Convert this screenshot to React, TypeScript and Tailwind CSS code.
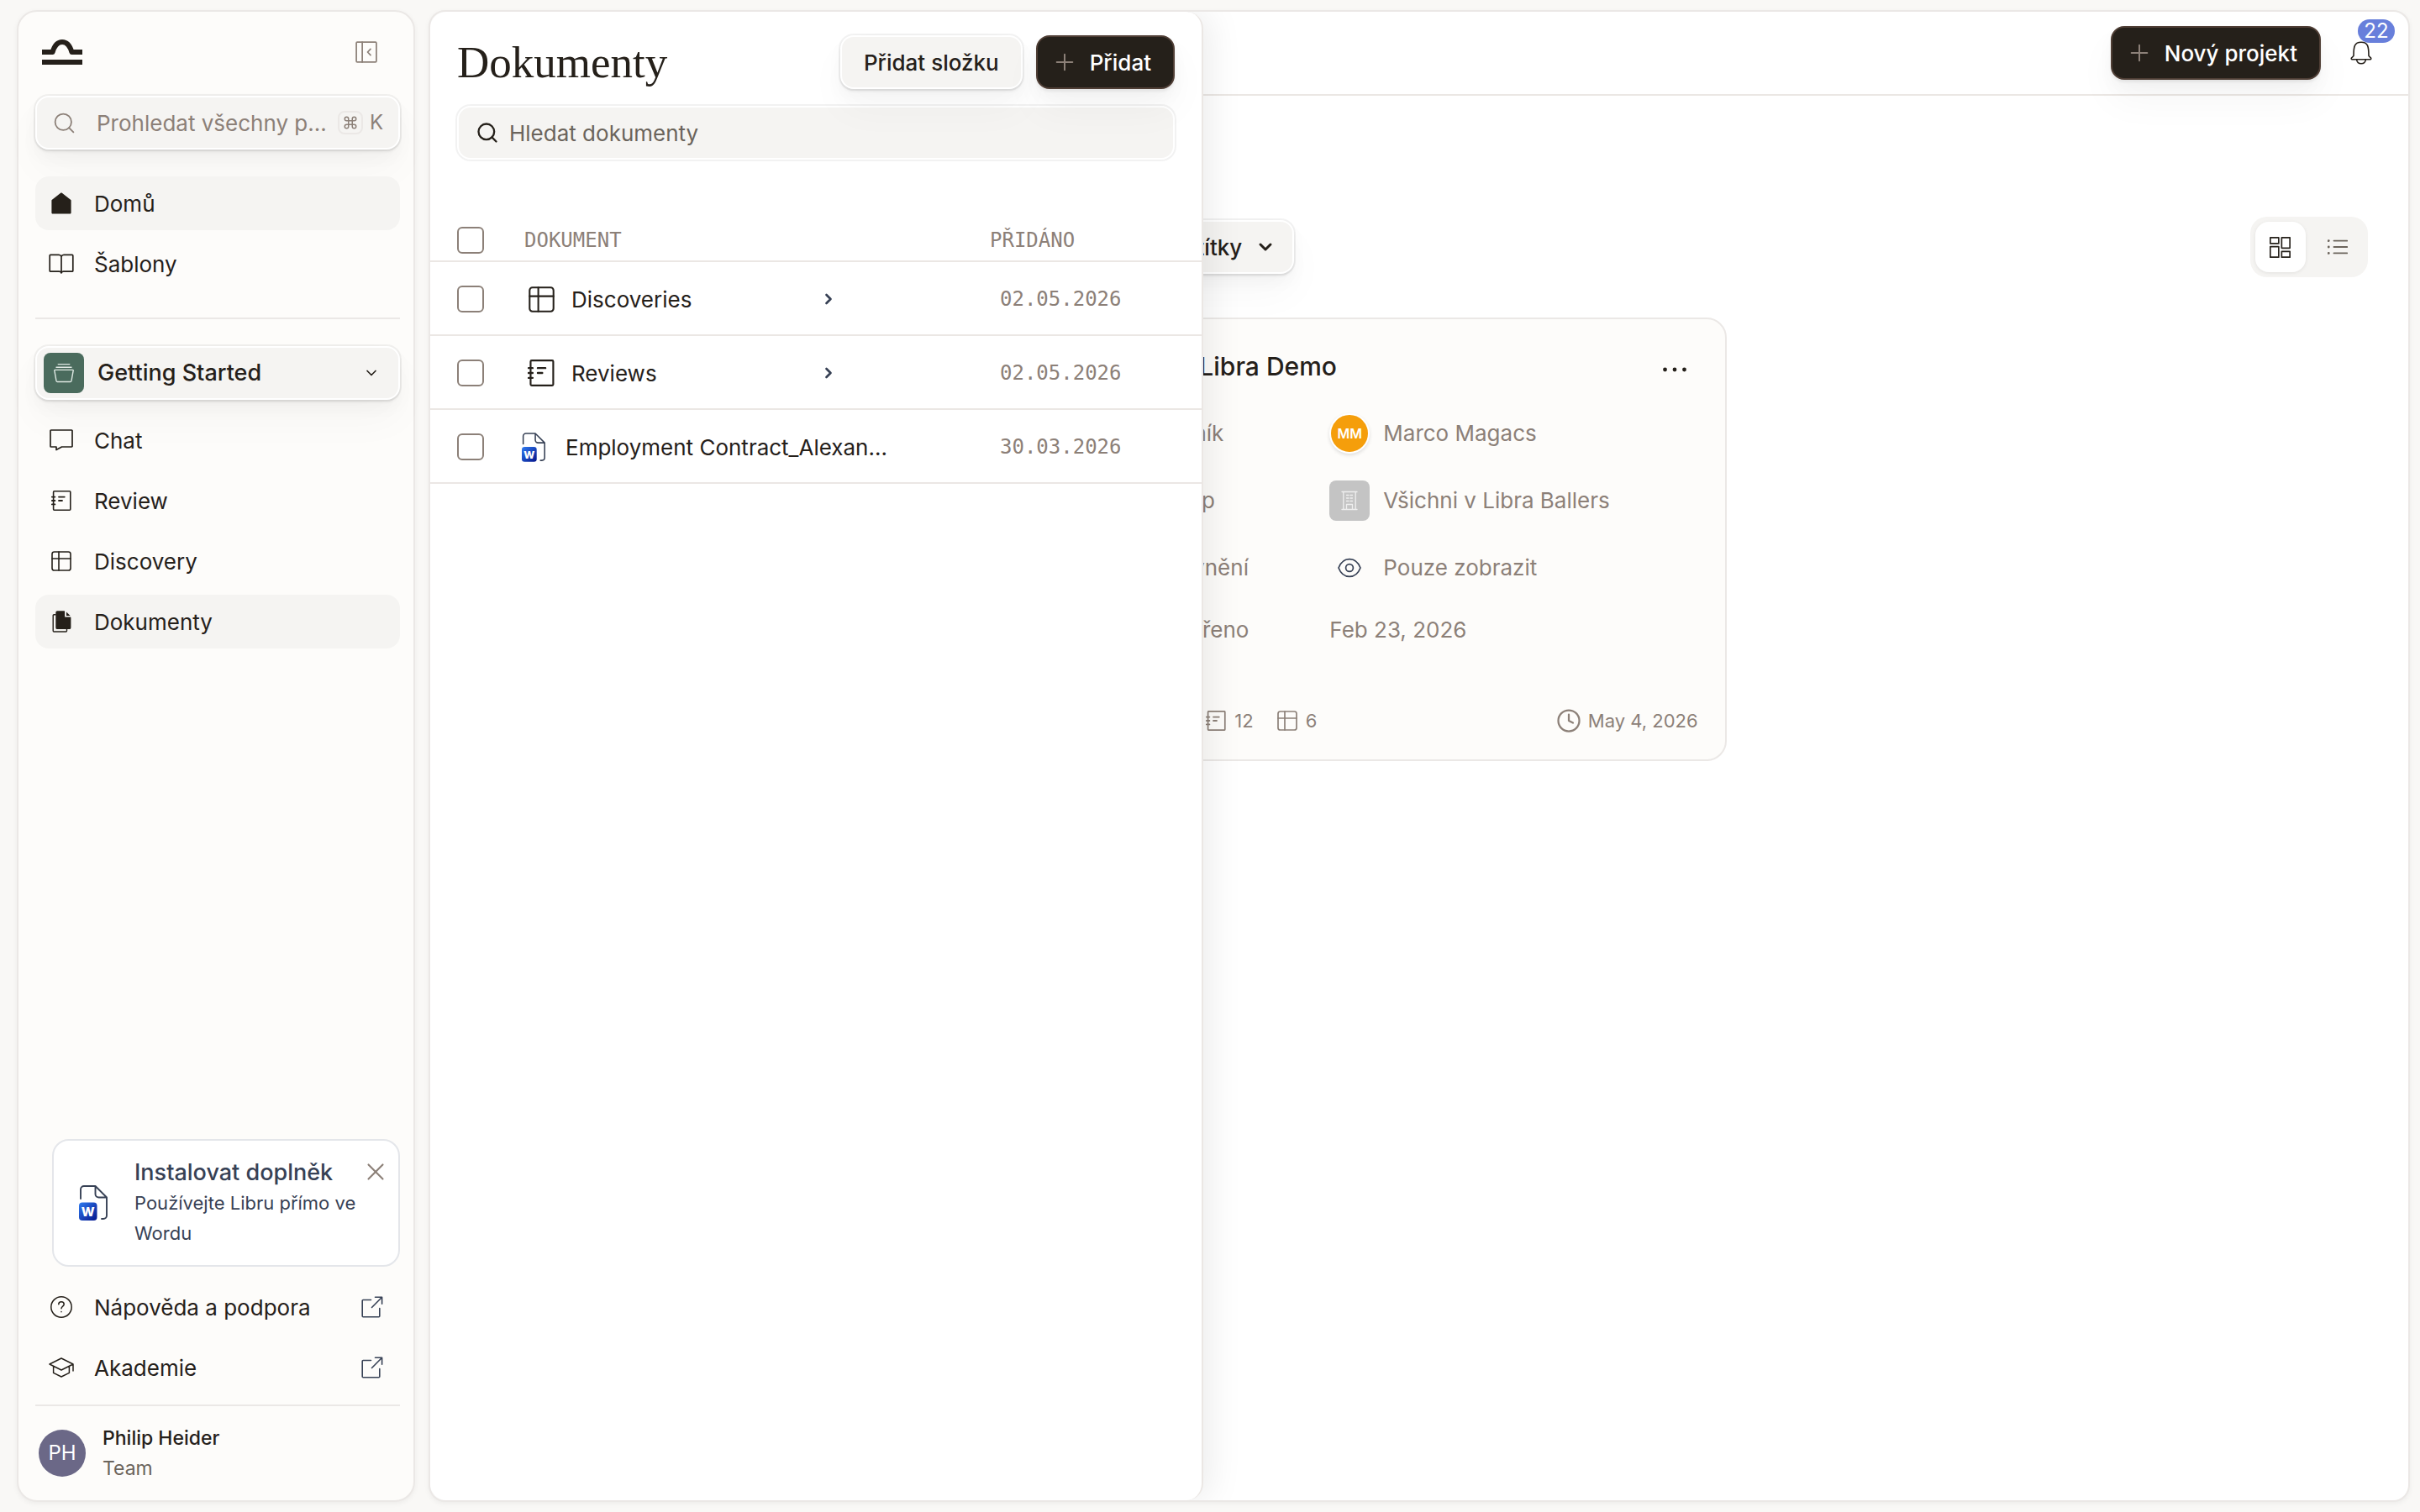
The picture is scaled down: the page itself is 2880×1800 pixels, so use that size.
import type { ReactNode, SVGProps } from "react";
import { ChevronDown, ChevronRight, Clock, Command, Plus, Search, X } from "lucide-react";

type IconProps = SVGProps<SVGSVGElement>;

function Icon({ children, viewBox = "0 0 24 24", strokeWidth = 1.6, ...props }: IconProps) {
  return (
    <svg
      viewBox={viewBox}
      fill="none"
      stroke="currentColor"
      strokeWidth={strokeWidth}
      strokeLinecap="round"
      strokeLinejoin="round"
      aria-hidden
      {...props}
    >
      {children}
    </svg>
  );
}

const Logo = () => (
  <svg viewBox="0 0 48 30" className="h-[30px] w-12" fill="none" stroke="#25201a" strokeWidth="6" strokeLinejoin="round" aria-hidden>
    <path d="M0 15h12.6C14.6 8 18 3 24 3s9.4 5 11.4 12H48" />
    <path d="M0 27h48" />
  </svg>
);

const CollapseIcon = (p: IconProps) => (
  <Icon {...p}>
    <rect x="1" y="1" width="22" height="22" rx="1" />
    <path d="M7.5 1v22M16.6 8.6 13.4 12l3.2 3.4" />
  </Icon>
);

const HomeIcon = (p: IconProps) => (
  <Icon {...p} viewBox="0 0 24 26" fill="currentColor">
    <path d="M12 1.2 22.8 9.6V24.6H1.200V9.600z" />
  </Icon>
);

const BookIcon = (p: IconProps) => (
  <Icon {...p} viewBox="0 0 30 24" strokeWidth={1.7}>
    <path d="M15 3.4C14.4 2 13.2 1.4 12 1.4H2.2a1 1 0 0 0-1 1v17.8a1 1 0 0 0 1 1H12.5c1.2 0 2 .6 2.500 1.800.5-1.200 1.300-1.800 2.500-1.800h10.300a1 1 0 0 0 1-1V2.400a1 1 0 0 0-1-1H18c-1.200 0-2.400.6-3 2zM15 3.400V22.500" />
  </Icon>
);

const ChatIcon = (p: IconProps) => (
  <Icon {...p} viewBox="0 0 28 26" strokeWidth={1.7}>
    <path d="M1.8 1h24.4a.8.8 0 0 1 .8.8v18.4a.8.8 0 0 1-.8.8H14.500L8 24.600V21H1.800a.8.8 0 0 1-.8-.8V1.800A.8.8 0 0 1 1.800 1z" />
  </Icon>
);

const ReviewIcon = (p: IconProps) => (
  <Icon {...p}>
    <rect x="2.6" y=".8" width="20.2" height="22.4" rx="1" />
    <path d="M.8 7.6h3.600M.8 12h3.600M.8 16.400h3.600M9 7.600h6.800M9 12h4" strokeWidth={1.8} />
  </Icon>
);

const TableIcon = (p: IconProps) => (
  <Icon {...p}>
    <rect x="1" y="1" width="22" height="22" rx="2.6" />
    <path d="M9 1v22M1 9h22" />
  </Icon>
);

const DocsIcon = (p: IconProps) => (
  <Icon {...p} viewBox="0 0 24 26" strokeWidth={1.4}>
    <path d="M5 4.8H3.200a1 1 0 0 0-1 1V24a1 1 0 0 0 1 1H17.500a1 1 0 0 0 1-1V22" />
    <path d="M15.4 1H7.200a1.200 1.200 0 0 0-1.200 1.200v18a1.200 1.200 0 0 0 1.200 1.200h14.300a1.200 1.200 0 0 0 1.200-1.200V8.200h-7.300z" fill="currentColor" />
    <path d="M18 1.4V6h4.600z" fill="currentColor" stroke="none" />
  </Icon>
);

const HelpIcon = (p: IconProps) => (
  <Icon {...p} viewBox="0 0 26 26" strokeWidth={1.5}>
    <circle cx="13" cy="13" r="12.2" />
    <path d="M9.8 9.800c0-2 1.400-3 3.200-3s3.200 1.100 3.200 2.900c0 2.300-3.200 2.500-3.200 5.100M13 18.600v.2" />
  </Icon>
);

const CapIcon = (p: IconProps) => (
  <Icon {...p} viewBox="0 0 30 24" strokeWidth={1.5}>
    <path d="M15 1 1 8l14 7 14-7zM5.600 10.400v8L15 23l9.400-4.600v-8M29 8v8" />
  </Icon>
);

const ExternalIcon = (p: IconProps) => (
  <Icon {...p} viewBox="0 0 26 26">
    <path d="M11.5 4.500H2.200a1 1 0 0 0-1 1V23.800a1 1 0 0 0 1 1h18.600a1 1 0 0 0 1-1V14.500M12.500 13.500 24.600 1.300M16.500 1.300h8.100v8" />
  </Icon>
);

const BasketIcon = (p: IconProps) => (
  <Icon {...p} strokeWidth={1.4}>
    <path d="M5.2 1.600h13.600M3 5.200h18M1.400 8.400h21.200a.6.6 0 0 1 .6.8L21 21.400a1.400 1.400 0 0 1-1.400 1.100H4.400A1.400 1.400 0 0 1 3 21.400L.8 9.200a.6.6 0 0 1 .6-.8z" />
  </Icon>
);

const BuildingIcon = (p: IconProps) => (
  <Icon {...p} viewBox="0 0 20 24" strokeWidth={1.3}>
    <path d="M1 1.500h18M1 22.500h18M2.800 1.500v21M17.200 1.500v21M6.500 22.500v-6h7v6M6.500 5.500h2.500M11 5.500h2.500M6.500 9h2.500M11 9h2.500M6.500 12.500h2.500M11 12.500h2.500" />
  </Icon>
);

const EyeIcon = (p: IconProps) => (
  <Icon {...p} viewBox="0 0 28 24" strokeWidth={1.7}>
    <path d="M1 12C3.500 5.500 8 1.600 14 1.600S24.500 5.500 27 12c-2.500 6.500-7 10.400-13 10.400S3.500 18.500 1 12z" />
    <circle cx="14" cy="12" r="4.4" />
  </Icon>
);

const BellIcon = (p: IconProps) => (
  <Icon {...p} viewBox="0 0 26 28">
    <path d="M4 17.500C4 6 5 1.200 13 1.200S22 6 22 17.500l2.600 2.600c.4.800.1 1.700-.8 1.700H2.200c-.9 0-1.200-.9-.8-1.700zM7.500 21.800c.6 3.400 2.600 5 5.500 5s4.900-1.600 5.500-5" />
  </Icon>
);

const GridIcon = (p: IconProps) => (
  <Icon {...p}>
    <rect x=".8" y=".8" width="9.6" height="6.8" />
    <rect x="13.8" y=".8" width="9.4" height="12" />
    <rect x=".8" y="11.2" width="9.6" height="12" />
    <rect x="13.8" y="16.6" width="9.4" height="6.6" />
  </Icon>
);

const ListIcon = (p: IconProps) => (
  <Icon {...p} strokeWidth={1.8}>
    <path d="M7.5 4.600h15.800M7.500 12h15.800M7.500 19.400h15.800" />
    <path d="M1.2 4.600h.1M1.200 12h.1M1.200 19.400h.1" strokeWidth={2.8} />
  </Icon>
);

function WordIcon({ className }: { className?: string }) {
  return (
    <svg viewBox="0 0 34 42" className={className} fill="none" aria-hidden>
      <defs>
        <linearGradient id="word" x1="0" y1="0" x2="1" y2="1">
          <stop offset="0" stopColor="#2f7bf0" />
          <stop offset="1" stopColor="#04148c" />
        </linearGradient>
      </defs>
      <path
        d="M2 16V5a4 4 0 0 1 4-4h13.500L33 14.500V36a4 4 0 0 1-4 4h-2M19.500 1v9.500a4 4 0 0 0 4 4H33"
        stroke="#374155"
        strokeWidth="1.9"
        strokeLinecap="round"
        strokeLinejoin="round"
      />
      <rect y="20.5" width="21.5" height="21.5" rx="4" fill="url(#word)" />
      <text x="10.7" y="37" textAnchor="middle" fontSize="15" fontWeight="800" fontFamily="Inter, sans-serif" fill="#fff">
        W
      </text>
    </svg>
  );
}

function NavItem({ icon, label, active, external }: { icon: ReactNode; label: string; active?: boolean; external?: boolean }) {
  return (
    <a
      href="#"
      className={`flex h-16 items-center gap-6 rounded-2xl pl-4 pr-5 text-[26px] ${active ? "bg-[#f5f4f2]" : ""}`}
    >
      <span className="flex w-[30px] justify-center">{icon}</span>
      <span className="flex-1">{label}</span>
      {external && <ExternalIcon className="size-[26px] text-[#374155]" />}
    </a>
  );
}

const raised =
  "border-2 border-white bg-[#f5f4f2] shadow-[0_0_0_2px_rgba(0,0,0,0.05),0_3px_3px_rgba(0,0,0,0.06),0_10px_20px_rgba(0,0,0,0.03),0_24px_48px_rgba(0,0,0,0.03)]";
const dark =
  "border-2 border-[#4f3e35] bg-[#25201a] text-white shadow-[0_3px_3px_rgba(0,0,0,0.06),0_10px_20px_rgba(0,0,0,0.03),0_24px_48px_rgba(0,0,0,0.04)]";

function Sidebar() {
  return (
    <aside className="flex w-[474px] shrink-0 flex-col rounded-3xl border-2 border-[#ebe8e6] bg-[#fdfcfa] pl-5 pr-4 shadow-[0_2px_6px_rgba(0,0,0,0.05)]">
      <div className="flex h-24 items-center justify-between pl-2 pr-4">
        <Logo />
        <button aria-label="Sbalit panel" className="flex size-12 items-center justify-center text-[#8c8078]">
          <CollapseIcon className="size-[26px]" />
        </button>
      </div>

      <label className={`mt-1 flex h-16 items-center rounded-2xl px-[18px] text-[#8c8078] ${raised}`}>
        <Search className="size-[29px] shrink-0" strokeWidth={1.5} />
        <input
          type="text"
          aria-label="Prohledat všechny projekty"
          placeholder="Prohledat všechny p..."
          className="ml-6 min-w-0 flex-1 bg-transparent text-[26px] outline-none placeholder:text-[#8c8078]"
        />
        <kbd className="flex h-7 w-[30px] shrink-0 items-center justify-center rounded-lg border-2 border-[#ebe8e6]">
          <Command className="size-[18px]" strokeWidth={2} />
        </kbd>
        <kbd className="ml-2 w-4 text-center font-[Inter,sans-serif] text-2xl">K</kbd>
      </label>

      <nav className="mt-8 flex flex-col gap-2">
        <NavItem active icon={<HomeIcon className="h-[26px] w-6" />} label="Domů" />
        <NavItem icon={<BookIcon className="h-6 w-[30px]" />} label="Šablony" />
      </nav>

      <hr className="my-8 border-t-2 border-[#ebe8e6]" />

      <button className={`flex h-16 items-center rounded-2xl pl-2 pr-[22px] text-[27px] font-medium ${raised}`}>
        <span className="flex size-12 items-center justify-center rounded-lg bg-[#4a6b5d] text-[#dfe8e3]">
          <BasketIcon className="size-6" />
        </span>
        <span className="ml-4 flex-1 text-left">Getting Started</span>
        <ChevronDown className="size-5" strokeWidth={2} />
      </button>

      <nav className="mt-4 flex flex-col gap-2">
        <NavItem icon={<ChatIcon className="h-[26px] w-7" />} label="Chat" />
        <NavItem icon={<ReviewIcon className="size-6" />} label="Review" />
        <NavItem icon={<TableIcon className="size-6" />} label="Discovery" />
        <NavItem active icon={<DocsIcon className="h-[26px] w-6" />} label="Dokumenty" />
      </nav>

      <section className="relative mt-auto ml-5 flex items-center gap-8 rounded-[20px] border-2 border-[#e4e6ea] bg-white px-[30px] py-5 text-[#374155]">
        <WordIcon className="h-[42px] w-[34px] shrink-0" />
        <div>
          <h2 className="text-[27px] leading-9 font-medium">Instalovat doplněk</h2>
          <p className="w-72 text-[22px] leading-9">Používejte Libru přímo ve Wordu</p>
        </div>
        <button aria-label="Zavřít" className="absolute top-5 right-2.5 text-[#8c8078]">
          <X className="size-[34px]" strokeWidth={1.5} />
        </button>
      </section>

      <nav className="mt-4 flex flex-col gap-2">
        <NavItem external icon={<HelpIcon className="size-[26px]" />} label="Nápověda a podpora" />
        <NavItem external icon={<CapIcon className="h-6 w-[30px]" />} label="Akademie" />
      </nav>

      <div className="mt-3 flex items-center gap-5 border-t-2 border-[#ebe8e6] py-5 pl-1">
        <span className="flex size-14 items-center justify-center rounded-full bg-[#6b6887] text-2xl text-white">PH</span>
        <div className="text-[23px] leading-9">
          <p className="font-medium">Philip Heider</p>
          <p className="text-[#6b645c]">Team</p>
        </div>
      </div>
    </aside>
  );
}

const documents = [
  { name: "Discoveries", date: "02.05.2026", kind: "table" },
  { name: "Reviews", date: "02.05.2026", kind: "review" },
  { name: "Employment Contract_Alexan...", date: "30.03.2026", kind: "word" },
];

function Checkbox({ label }: { label: string }) {
  return (
    <input
      type="checkbox"
      aria-label={label}
      className="block size-8 appearance-none rounded-md border-2 border-[#8c8078] bg-white"
    />
  );
}

function DocumentsPanel() {
  return (
    <section className="absolute inset-y-0 left-0 w-[920px] rounded-[20px] border-r-2 border-[#ebe7e4] bg-white pt-7 shadow-[8px_0_40px_rgba(0,0,0,0.08)]">
      <div className="px-8">
        <div className="flex items-center gap-4">
          <h1 className="flex-1 font-['Liberation_Serif',serif] text-[53px] leading-[64px]">Dokumenty</h1>
          <button className={`h-16 rounded-2xl px-[26px] text-[26px] font-medium ${raised}`}>Přidat složku</button>
          <button className={`flex h-16 items-center gap-3.5 rounded-2xl pl-4 pr-[26px] text-[26px] font-medium ${dark}`}>
            <Plus className="size-8 text-[#8c8078]" strokeWidth={1.5} />
            Přidat
          </button>
        </div>
        <label className="mt-5 flex h-16 items-center gap-3 rounded-2xl border-2 border-white bg-[#f5f4f2] px-5 shadow-[0_0_0_2px_rgba(0,0,0,0.05)]">
          <Search className="size-7" strokeWidth={2} />
          <input
            type="text"
            aria-label="Hledat dokumenty"
            placeholder="Hledat dokumenty"
            className="min-w-0 flex-1 bg-transparent text-[26px] outline-none placeholder:text-[#6b645c]"
          />
        </label>
      </div>

      <table className="mt-[72px] w-full table-fixed border-separate border-spacing-0 text-left">
        <thead className="font-['DejaVu_Sans_Mono',monospace] text-2xl text-[#8c8078]">
          <tr>
            <th className="h-[50px] w-28 border-b-2 border-[#ebe7e4] pl-8">
              <Checkbox label="Vybrat vše" />
            </th>
            <th className="border-b-2 border-[#ebe7e4] font-normal">DOKUMENT</th>
            <th className="w-[252px] border-b-2 border-[#ebe7e4] font-normal">PŘIDÁNO</th>
          </tr>
        </thead>
        <tbody>
          {documents.map((doc) => (
            <tr key={doc.name}>
              <td className="h-[88px] border-b-2 border-[#ebe7e4] pt-0.5 pl-8">
                <Checkbox label={doc.name} />
              </td>
              <td className="border-b-2 border-[#ebe7e4] pt-0.5">
                {doc.kind === "word" ? (
                  <div className="-ml-[3px] flex items-center gap-6 text-[26px] whitespace-nowrap">
                    <WordIcon className="h-[35px] w-7 shrink-0" />
                    {doc.name}
                  </div>
                ) : (
                  <div className="flex w-[372px] items-center gap-5 pl-1 text-[26px]">
                    <span className="flex w-8 justify-center">
                      {doc.kind === "table" ? <TableIcon className="size-[31px]" /> : <ReviewIcon className="size-8" />}
                    </span>
                    <span className="flex-1">{doc.name}</span>
                    <ChevronRight className="size-5 text-[#374155]" strokeWidth={3.2} />
                  </div>
                )}
              </td>
              <td className="border-b-2 border-[#ebe7e4] pt-0.5 pl-3 font-['DejaVu_Sans_Mono',monospace] text-2xl text-[#8c8078]">
                {doc.date}
              </td>
            </tr>
          ))}
        </tbody>
      </table>
    </section>
  );
}

function ProjectCard() {
  return (
    <article className="col-start-2 flex flex-col rounded-3xl border-2 border-[#ebe8e6] bg-[#fdfcfa] pt-8 pr-8 pb-7 pl-[30px]">
      <div className="flex h-12 items-center">
        <span className="flex size-12 items-center justify-center rounded-lg bg-[#4a6b5d] text-[#dfe8e3]">
          <BasketIcon className="size-6" />
        </span>
        <h2 className="ml-6 flex-1 text-[30px] font-medium">Libra Demo</h2>
        <button aria-label="Další možnosti" className="mt-2 flex w-14 justify-center">
          <svg viewBox="0 0 32 6" className="h-1.5 w-8" fill="currentColor" aria-hidden>
            <circle cx="4.5" cy="3" r="2.4" />
            <circle cx="16" cy="3" r="2.4" />
            <circle cx="27.5" cy="3" r="2.4" />
          </svg>
        </button>
      </div>

      <dl className="mt-8 grid grid-cols-[227px_1fr] items-center gap-y-8 text-[26px] leading-9 text-[#8c8078]">
        <dt className="pl-1">Vlastník</dt>
        <dd className="flex h-12 items-center gap-4">
          <span className="flex size-12 items-center justify-center rounded-full border-2 border-white bg-[#f59e0b] text-base font-semibold text-white shadow-[0_2px_4px_rgba(0,0,0,0.12)]">
            MM
          </span>
          Marco Magacs
        </dd>
        <dt className="pl-1">Přístup</dt>
        <dd className="flex h-12 items-center gap-4">
          <span className="flex size-12 items-center justify-center rounded-lg bg-[#c4c4c4] text-[#efefef]">
            <BuildingIcon className="h-6 w-5" />
          </span>
          Všichni v Libra Ballers
        </dd>
        <dt className="pl-1">Oprávnění</dt>
        <dd className="flex h-12 items-center gap-4">
          <span className="flex size-12 items-center justify-center text-[#374155]">
            <EyeIcon className="h-6 w-7" />
          </span>
          Pouze zobrazit
        </dd>
        <dt className="pl-1">Vytvořeno</dt>
        <dd>Feb 23, 2026</dd>
      </dl>

      <div className="mt-[72px] flex items-center pl-20 text-[22px] leading-9 text-[#8c8078]">
        <ReviewIcon className="size-6" strokeWidth={1.7} />
        <span className="ml-2.5">12</span>
        <TableIcon className="ml-7 size-6" strokeWidth={1.7} />
        <span className="ml-2.5 flex-1">6</span>
        <Clock className="size-[30px]" strokeWidth={1.8} />
        <span className="ml-2">May 4, 2026</span>
      </div>
    </article>
  );
}

function Main() {
  return (
    <main className="relative min-w-0 flex-1 overflow-hidden rounded-[20px] border-2 border-[#ebe8e6] bg-white shadow-[0_2px_6px_rgba(0,0,0,0.05)]">
      <header className="flex h-[100px] items-center justify-end gap-6 border-b-2 border-[#ebe7e4] pr-8">
        <button className={`flex h-16 items-center gap-3.5 rounded-2xl pl-4 pr-[26px] text-[26px] font-medium ${dark}`}>
          <Plus className="size-8 text-[#8c8078]" strokeWidth={1.5} />
          Nový projekt
        </button>
        <button aria-label="Oznámení" className="relative flex size-12 items-center justify-center">
          <BellIcon className="h-7 w-[26px]" />
          <span className="absolute -top-4 left-5 flex h-7 w-11 items-center justify-center rounded-full bg-[#687fdb] text-2xl text-white">
            22
          </span>
        </button>
      </header>

      <div className="px-12 pt-36">
        <div className="grid grid-cols-3 items-center gap-8">
          <button className={`col-start-2 ml-10 flex h-16 w-[177px] items-center justify-end gap-4 rounded-2xl pr-5 text-[26px] font-medium ${raised}`}>
            Štítky
            <ChevronDown className="size-6" strokeWidth={3} />
          </button>
          <div className="flex gap-2 justify-self-end rounded-[20px] bg-[#f5f4f2] p-1.5">
            <button aria-label="Mřížka" className="flex size-[60px] items-center justify-center rounded-2xl bg-white shadow-[0_1px_4px_rgba(0,0,0,0.08)]">
              <GridIcon className="size-[25px]" />
            </button>
            <button aria-label="Seznam" className="flex size-[60px] items-center justify-center text-[#6b645c]">
              <ListIcon className="size-6" />
            </button>
          </div>
        </div>
        <div className="mt-12 grid grid-cols-3 gap-8">
          <ProjectCard />
        </div>
      </div>

      <DocumentsPanel />
    </main>
  );
}

export default function App() {
  return (
    <div className="flex min-h-screen gap-4 bg-[#f9f8f6] py-3 pr-3 pl-5 font-[Inter,sans-serif] text-[#25201a]">
      <Sidebar />
      <Main />
    </div>
  );
}
